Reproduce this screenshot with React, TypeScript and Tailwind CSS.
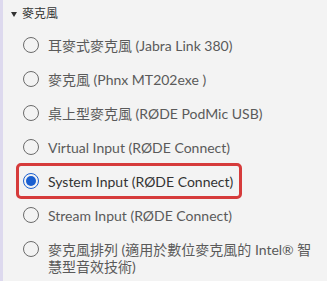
import React from 'react';

const options = [
  '耳麥式麥克風 (Jabra Link 380)',
  '麥克風 (Phnx MT202exe )',
  '桌上型麥克風 (RØDE PodMic USB)',
  'Virtual Input (RØDE Connect)',
  'System Input (RØDE Connect)',
  'Stream Input (RØDE Connect)',
  '麥克風排列 (適用於數位麥克風的 Intel® 智慧型音效技術)',
];

const selected = 4;

export default function App() {
  return (
    <div
      className="flex w-[327px] h-[281px] bg-[#f3f3f3] overflow-hidden"
      style={{ fontFamily: 'Lato, "Noto Sans CJK TC", sans-serif' }}
    >
      <div className="w-[3px] bg-[#ddd9ee] shrink-0" />
      <div className="flex-1 pt-[5px]">
        {/* section header */}
        <div className="flex items-center h-[18px] pl-[8px] text-[12px] text-[#333]">
          <svg width="6" height="5" viewBox="0 0 6 5" className="mr-[5px]">
            <path d="M0 0h6L3 5z" fill="#333" />
          </svg>
          麥克風
        </div>
        <div className="flex flex-col items-start pt-[5px] pl-[13px]">
          {options.map((label, i) => {
            const on = i === selected;
            return (
              <div
                key={label}
                className={
                  on
                    ? 'flex items-start pl-[4px] pr-[6px] py-[6.5px] my-[-1px] border-[3px] border-[#d63b3b] rounded-[5px]'
                    : 'flex items-start pl-[7px] py-[8.5px] w-[300px]'
                }
              >
                <span
                  className={
                    on
                      ? 'mt-[0.5px] w-[16px] h-[16px] shrink-0 rounded-full border border-[#1a5fd0] flex items-center justify-center'
                      : 'mt-[0.5px] w-[16px] h-[16px] shrink-0 rounded-full border border-[#6b6b6b]'
                  }
                >
                  {on && <span className="w-[10px] h-[10px] rounded-full bg-[#1a5fd0]" />}
                </span>
                <span
                  className={
                    on
                      ? 'ml-[9px] text-[14px] leading-[17px] text-[#333] whitespace-nowrap'
                      : 'ml-[9px] text-[14px] leading-[17px] text-[#5a5a5a]'
                  }
                >
                  {label}
                </span>
              </div>
            );
          })}
        </div>
      </div>
    </div>
  );
}
